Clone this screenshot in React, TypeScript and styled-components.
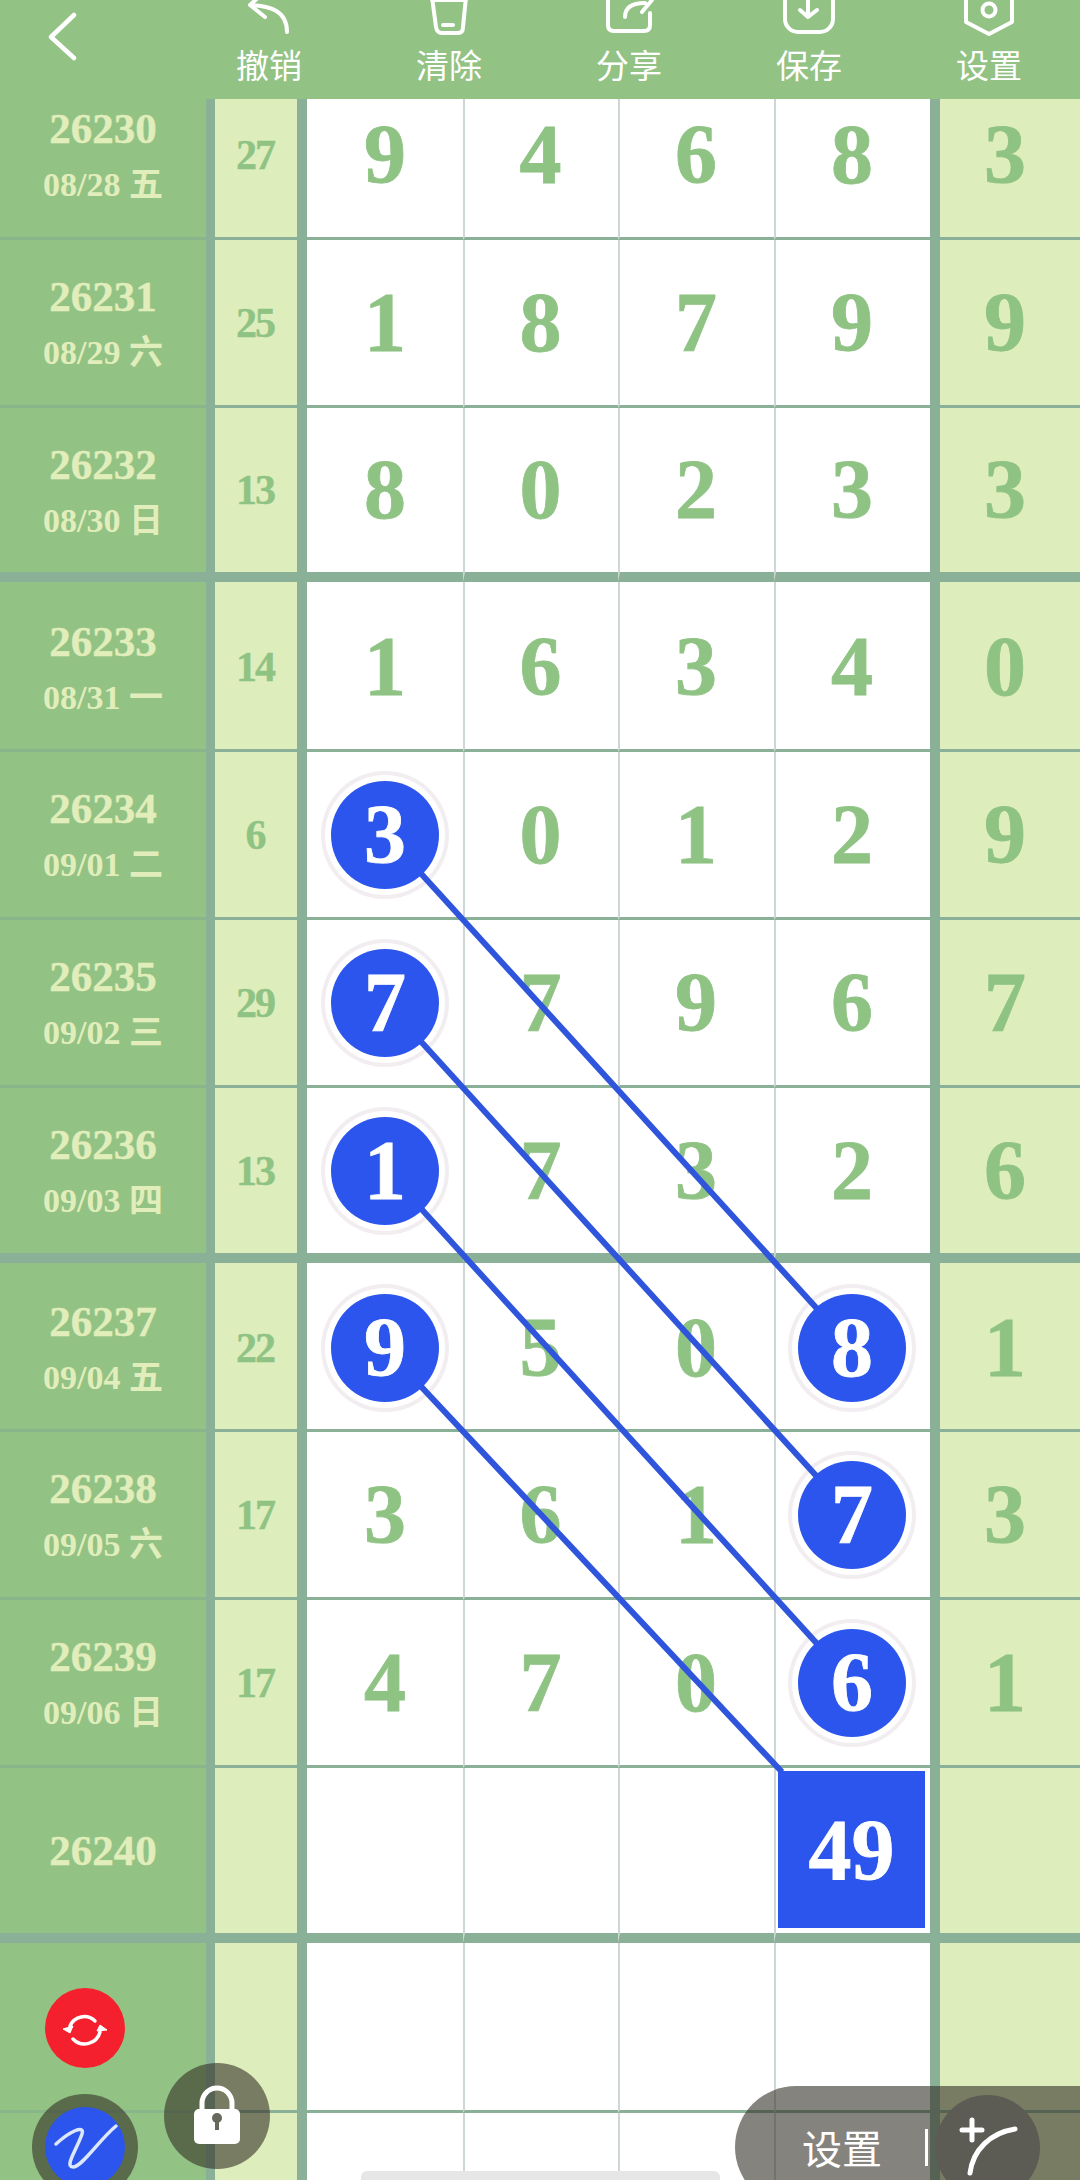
import * as React from "react";
import styled, { createGlobalStyle } from "styled-components";

const GREEN = "#93c285";
const LIGHT = "#deedbc";
const LINE = "#8bb098";
const DIGIT = "#8fc384";
const BLUE = "#2b55ec";
const CN = '"Noto Sans CJK SC", "Noto Sans", sans-serif';
const NUM = '"Liberation Serif", "Noto Sans CJK SC", serif';

type Mark = "ball" | "square" | undefined;

interface RowData {
  period?: string;
  date?: string;
  sum?: string;
  nums: { v: string; mark?: Mark }[];
  last?: string;
  h: number;
  thick?: boolean;
  lead?: boolean;
}

const n = (...vals: string[]) => vals.map((v) => ({ v }));

const rows: RowData[] = [
  { period: "26230", date: "08/28 五", sum: "27", nums: n("9", "4", "6", "8"), last: "3", h: 168 },
  { period: "26231", date: "08/29 六", sum: "25", nums: n("1", "8", "7", "9"), last: "9", h: 168 },
  { period: "26232", date: "08/30 日", sum: "13", nums: n("8", "0", "2", "3"), last: "3", h: 174, thick: true },
  { period: "26233", date: "08/31 一", sum: "14", nums: n("1", "6", "3", "4"), last: "0", h: 170, lead: true },
  {
    period: "26234",
    date: "09/01 二",
    sum: "6",
    nums: [{ v: "3", mark: "ball" }, ...n("0", "1", "2")],
    last: "9",
    h: 168,
  },
  {
    period: "26235",
    date: "09/02 三",
    sum: "29",
    nums: [{ v: "7", mark: "ball" }, ...n("7", "9", "6")],
    last: "7",
    h: 168,
  },
  {
    period: "26236",
    date: "09/03 四",
    sum: "13",
    nums: [{ v: "1", mark: "ball" }, ...n("7", "3", "2")],
    last: "6",
    h: 175,
    thick: true,
  },
  {
    period: "26237",
    date: "09/04 五",
    sum: "22",
    nums: [{ v: "9", mark: "ball" }, ...n("5", "0"), { v: "8", mark: "ball" }],
    last: "1",
    h: 169,
    lead: true,
  },
  {
    period: "26238",
    date: "09/05 六",
    sum: "17",
    nums: [...n("3", "6", "1"), { v: "7", mark: "ball" }],
    last: "3",
    h: 168,
  },
  {
    period: "26239",
    date: "09/06 日",
    sum: "17",
    nums: [...n("4", "7", "0"), { v: "6", mark: "ball" }],
    last: "1",
    h: 168,
  },
  {
    period: "26240",
    nums: [...n("", "", ""), { v: "49", mark: "square" }],
    h: 175,
    thick: true,
  },
  { nums: n("", "", "", ""), h: 170 },
  { nums: n("", "", "", ""), h: 70 },
];

// ball centre to ball centre, the blue dots sit on top
const links = [
  [385, 834, 851, 1346],
  [385, 1002, 851, 1514],
  [385, 1169, 851, 1681],
  [385, 1348, 782, 1772],
];

const UndoIcon = () => (
  <ToolSvg viewBox="0 0 80 40">
    <path d="M21 5C42 6 58 11 58 32M21 5L36 17M21 5L31 -4" />
  </ToolSvg>
);

const ClearIcon = () => (
  <ToolSvg viewBox="0 0 80 40">
    <path d="M23 -3L27 27Q28 33 33 33H49Q54 33 54 27L57 -3M23 0H57" />
    <path d="M34 25H44" />
  </ToolSvg>
);

const ShareIcon = () => (
  <ToolSvg viewBox="0 0 80 40">
    <path d="M19 -4V25Q19 31 25 31H55Q61 31 61 25V13" />
    <path d="M36 17C36 8 42 3 56 3M63 0L53 12" />
  </ToolSvg>
);

const SaveIcon = () => (
  <ToolSvg viewBox="0 0 80 40">
    <rect x="16" y="-14" width="48" height="46" rx="13" />
    <path d="M39 -4V17M31 10L39 17L48 10" />
  </ToolSvg>
);

const SettingIcon = () => (
  <ToolSvg viewBox="0 0 80 40">
    <path d="M17 -5V22L40 34L63 22V-5" />
    <circle cx="40" cy="10" r="6.5" />
  </ToolSvg>
);

const tools = [
  { label: "撤销", icon: <UndoIcon /> },
  { label: "清除", icon: <ClearIcon /> },
  { label: "分享", icon: <ShareIcon /> },
  { label: "保存", icon: <SaveIcon /> },
  { label: "设置", icon: <SettingIcon /> },
];

export default function App() {
  return (
    <Page>
      <GlobalStyle />
      <Toolbar>
        <Back>
          <svg width="30" height="50" viewBox="0 0 30 50" fill="none" stroke="#fff" strokeWidth="4.5" strokeLinecap="round" strokeLinejoin="round">
            <path d="M27 3L4 25L27 46" />
          </svg>
        </Back>
        {tools.map((t) => (
          <Tool key={t.label}>
            {t.icon}
            <ToolLabel>{t.label}</ToolLabel>
          </Tool>
        ))}
      </Toolbar>

      <Table>
        {rows.map((r, i) => (
          <Row key={i} $h={r.h}>
            <LabelCell $thick={r.thick} $lead={r.lead}>
              {r.period && <Period>{r.period}</Period>}
              {r.date && <DateText>{r.date}</DateText>}
            </LabelCell>
            <SumCell $thick={r.thick} $lead={r.lead}>
              {r.sum}
            </SumCell>
            {r.nums.map((c, j) => (
              <NumCell key={j} $first={j === 0} $thick={r.thick} $lead={r.lead}>
                {c.mark === "ball" ? (
                  <BallRing>
                    <BallDot>{c.v}</BallDot>
                  </BallRing>
                ) : c.mark === "square" ? (
                  <Square>{c.v}</Square>
                ) : (
                  c.v
                )}
              </NumCell>
            ))}
            <LastCell $thick={r.thick} $lead={r.lead}>
              {r.last}
            </LastCell>
          </Row>
        ))}
      </Table>

      <LinkLayer width="1080" height="2180" viewBox="0 0 1080 2180">
        {links.map((l, i) => (
          <line key={i} x1={l[0]} y1={l[1]} x2={l[2]} y2={l[3]} stroke="#2e55dc" strokeWidth="6" />
        ))}
      </LinkLayer>

      <RedButton>
        <svg width="80" height="80" viewBox="0 0 80 80" fill="none">
          <path d="M25 38A15.5 15.5 0 0 1 50 33" stroke="#fff" strokeWidth="3.5" strokeLinecap="round" />
          <path d="M55 44A16 16 0 0 1 28 51" stroke="#fff" strokeWidth="3.5" strokeLinecap="round" />
          <path d="M18 41L28 38L25 45Z" fill="#fff" stroke="#fff" strokeWidth="1" strokeLinejoin="round" />
          <path d="M62 42L52 43L55 37Z" fill="#fff" stroke="#fff" strokeWidth="1" strokeLinejoin="round" />
        </svg>
      </RedButton>

      <PenRing>
        <PenDot>
          <svg width="80" height="80" viewBox="0 0 80 80" fill="none" stroke="#dce7fb" strokeWidth="3.5" strokeLinecap="round" strokeLinejoin="round">
            <path d="M11 37C24 25 40 17 37 27C32 42 19 60 28 60C37 60 54 33 71 19" />
          </svg>
        </PenDot>
      </PenRing>

      <LockButton>
        <svg width="106" height="106" viewBox="0 0 106 106" fill="none">
          <path d="M38 48V40A15 15 0 0 1 68 40V48" stroke="#fff" strokeWidth="5" />
          <rect x="30" y="46" width="46" height="35" rx="5" fill="#fff" />
          <circle cx="53" cy="55" r="5" fill="#66695c" />
          <rect x="51" y="56" width="4" height="11" fill="#66695c" />
        </svg>
      </LockButton>

      <SettingPill>
        <PillText>设置</PillText>
        <PillSep />
        <CurveButton>
          <svg width="105" height="105" viewBox="0 0 105 105" fill="none" stroke="#fff" strokeWidth="5" strokeLinecap="round">
            <path d="M27 35H47M37 25V45" />
            <path d="M35 78C38 55 55 38 80 34" />
          </svg>
        </CurveButton>
      </SettingPill>

      <HomeBar />
    </Page>
  );
}

const GlobalStyle = createGlobalStyle`
  html, body {
    margin: 0;
    padding: 0;
    background: #fff;
  }
`;

const Page = styled.div`
  position: relative;
  width: 1080px;
  height: 2180px;
  overflow: hidden;
  font-family: ${NUM};
`;

const Toolbar = styled.header`
  position: relative;
  z-index: 3;
  display: flex;
  height: 99px;
  background: ${GREEN};
  overflow: hidden;
`;

const Back = styled.div`
  width: 179px;
  padding: 12px 0 0 47px;
  box-sizing: border-box;
`;

const Tool = styled.div`
  display: flex;
  flex-direction: column;
  align-items: center;
  width: 180px;
`;

const ToolSvg = styled.svg`
  display: block;
  width: 80px;
  height: 40px;
  fill: none;
  stroke: #fff;
  stroke-width: 4;
  stroke-linecap: round;
  stroke-linejoin: round;
`;

const ToolLabel = styled.span`
  margin-top: 4px;
  font-family: ${CN};
  font-size: 33px;
  line-height: 40px;
  color: #fff;
`;

const Table = styled.main`
  margin-top: -27px;
`;

const Row = styled.div<{ $h: number }>`
  display: grid;
  grid-template-columns: 206px 91px 166px 155px 156px 156px 150px;
  height: ${(p) => p.$h}px;
`;

const Cell = styled.div<{ $thick?: boolean; $lead?: boolean }>`
  display: flex;
  align-items: center;
  justify-content: center;
  box-sizing: border-box;
  padding-top: ${(p) => (p.$lead ? 3 : 0)}px;
  border-bottom: ${(p) => (p.$thick ? 10 : 3)}px solid ${LINE};
`;

const LabelCell = styled(Cell)`
  flex-direction: column;
  background: ${GREEN};
  color: #e1eebb;
  border-bottom-color: ${(p) => (p.$thick ? LINE : "#88b68a")};
`;

const Period = styled.div`
  font-size: 43px;
  line-height: 42px;
  font-weight: 700;
  -webkit-text-stroke: 0.4px #e1eebb;
`;

const DateText = styled.div`
  margin-top: 19px;
  font-size: 34px;
  line-height: 32px;
  font-weight: 700;
  white-space: nowrap;
`;

const SumCell = styled(Cell)`
  padding-right: 2px;
  background: ${LIGHT};
  border-left: 9px solid ${LINE};
  color: ${DIGIT};
  font-size: 42px;
  font-weight: 700;
  letter-spacing: -2px;
  -webkit-text-stroke: 0.4px ${DIGIT};
`;

const NumCell = styled(Cell)<{ $first?: boolean }>`
  padding-right: ${(p) => (p.$first ? 0 : 2)}px;
  background: #fff;
  border-left: ${(p) => (p.$first ? `10px solid ${LINE}` : "2px solid #cfd6d6")};
  color: ${DIGIT};
  font-size: 84px;
  line-height: 1;
  font-weight: 700;
  -webkit-text-stroke: 0.8px ${DIGIT};
`;

const LastCell = styled(Cell)`
  padding-right: 10px;
  background: ${LIGHT};
  border-left: 10px solid ${LINE};
  color: ${DIGIT};
  font-size: 84px;
  line-height: 1;
  font-weight: 700;
  -webkit-text-stroke: 0.8px ${DIGIT};
`;

const BallRing = styled.div`
  width: 108px;
  height: 108px;
  border-radius: 50%;
  box-shadow: 0 0 0 6px #fff, 0 0 0 10px #f1edf0;
`;

const BallDot = styled.div`
  position: relative;
  z-index: 2;
  display: flex;
  align-items: center;
  justify-content: center;
  height: 100%;
  border-radius: 50%;
  background: ${BLUE};
  color: #fff;
  -webkit-text-stroke: 0.8px #fff;
`;

const Square = styled.div`
  position: relative;
  z-index: 2;
  display: flex;
  align-items: center;
  justify-content: center;
  align-self: stretch;
  flex: 1;
  margin: 3px 3px 5px 2px;
  background: ${BLUE};
  color: #fff;
  font-size: 86px;
  -webkit-text-stroke: 0.8px #fff;
`;

const LinkLayer = styled.svg`
  position: absolute;
  top: 0;
  left: 0;
  z-index: 1;
  pointer-events: none;
`;

const RedButton = styled.div`
  position: absolute;
  z-index: 4;
  left: 45px;
  top: 1988px;
  width: 80px;
  height: 80px;
  border-radius: 50%;
  background: #f5202d;
`;

const PenRing = styled.div`
  position: absolute;
  z-index: 4;
  left: 32px;
  top: 2094px;
  width: 106px;
  height: 106px;
  display: flex;
  align-items: center;
  justify-content: center;
  border-radius: 50%;
  background: rgba(52, 48, 38, 0.6);
`;

const PenDot = styled.div`
  width: 80px;
  height: 80px;
  border-radius: 50%;
  background: ${BLUE};
`;

const LockButton = styled.div`
  position: absolute;
  z-index: 4;
  left: 164px;
  top: 2063px;
  width: 106px;
  height: 106px;
  border-radius: 50%;
  background: rgba(52, 48, 38, 0.6);
`;

const SettingPill = styled.div`
  position: absolute;
  z-index: 4;
  left: 735px;
  right: 0;
  top: 2086px;
  height: 122px;
  display: flex;
  align-items: center;
  box-sizing: border-box;
  padding-left: 67px;
  border-radius: 61px 0 0 61px;
  background: rgba(52, 48, 38, 0.6);
`;

const PillText = styled.span`
  font-family: ${CN};
  font-size: 40px;
  color: #fff;
  white-space: nowrap;
`;

const PillSep = styled.span`
  width: 3px;
  height: 37px;
  margin-left: 43px;
  background: #fff;
`;

const CurveButton = styled.div`
  width: 105px;
  height: 105px;
  margin-left: 7px;
  border-radius: 50%;
  background: #5c5b54;
`;

const HomeBar = styled.div`
  position: absolute;
  z-index: 3;
  left: 361px;
  top: 2171px;
  width: 359px;
  height: 9px;
  border-radius: 6px 6px 0 0;
  background: #e6e6e6;
`;
